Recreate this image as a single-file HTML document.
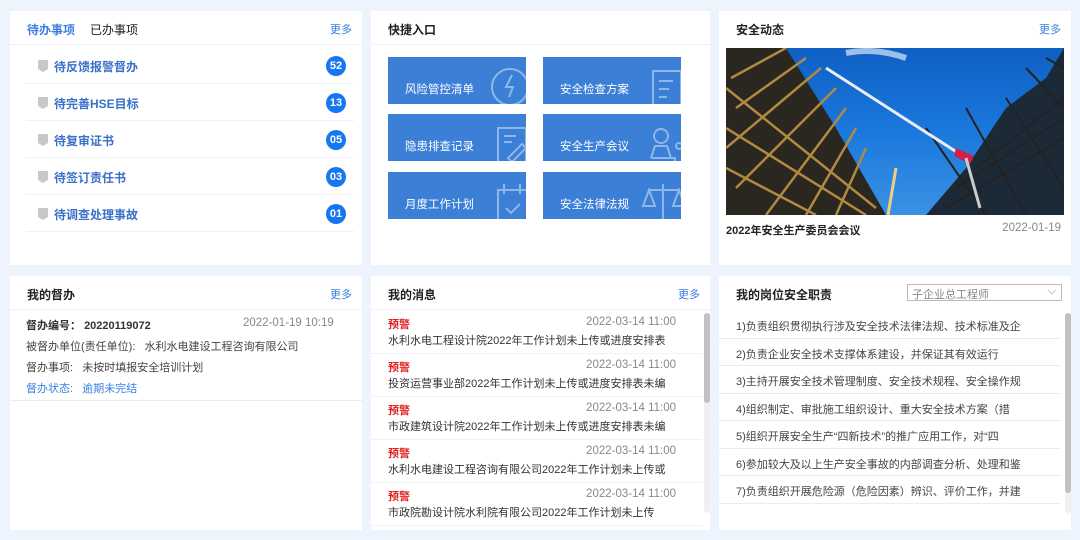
<!DOCTYPE html>
<html><head><meta charset="utf-8"><style>
*{margin:0;padding:0;box-sizing:border-box}
body{width:1080px;height:540px;background:#eef4fd;font-family:"Liberation Sans","Noto Sans CJK SC",sans-serif;position:relative;overflow:hidden;font-size:12px;color:#333}
.p{position:absolute;background:#fff}
.hd{height:34px;border-bottom:1px solid #eef1f5;position:relative}
.t{position:absolute;top:10px;font-size:12px;font-weight:bold;color:#222}
.more{position:absolute;top:10px;right:10px;color:#3a7fe0;font-size:11px}
.it{position:absolute;left:16px;right:8px;height:37px;border-bottom:1px solid #eef1f5}
.it .ic{position:absolute;left:12px;top:13px;width:10px;height:12px;background:#c8c8c8;clip-path:polygon(0 0,100% 0,100% 75%,50% 100%,0 75%)}
.it .tx{position:absolute;left:28px;top:11px;color:#3b70c8;font-weight:bold;font-size:12px}
.it .b{position:absolute;right:8px;top:9px;width:20px;height:20px;border-radius:50%;background:#1677f0;color:#fff;font-weight:bold;font-size:11px;text-align:center;line-height:20px}
.tile{position:absolute;width:138px;height:47px;background:#3c7fd6;color:#fff;font-size:11.5px;overflow:hidden}
.tile span{position:absolute;left:17px;top:24px}
.tile svg{position:absolute;right:-4px;top:8px}
.r{position:absolute;left:16px;font-size:11px;color:#444}
.msg{position:absolute;left:0;right:8px;height:43px;border-bottom:1px solid #eef1f5;font-size:11px}
.msg .w{position:absolute;left:17px;top:5px;color:#e02020;font-weight:bold}
.msg .d{position:absolute;right:26px;top:5px;color:#888;font-size:11.5px}
.msg .c{position:absolute;left:17px;top:21px;color:#333;white-space:nowrap}
.duty{position:absolute;left:0;right:10px;height:27.5px;border-bottom:1px solid #e3eefa;font-size:11px;color:#444;padding:7px 0 0 17px;white-space:nowrap;overflow:hidden}
</style></head><body>

<div class="p" style="left:10px;top:11px;width:352px;height:254px">
<div class="hd"><span class="t" style="left:17px;color:#3a7fe0">待办事项</span><span class="t" style="left:80px;font-weight:normal">已办事项</span><span class="more">更多</span></div>
<div class="it" style="top:36px"><i class="ic"></i><span class="tx">待反馈报警督办</span><span class="b">52</span></div>
<div class="it" style="top:73px"><i class="ic"></i><span class="tx">待完善HSE目标</span><span class="b">13</span></div>
<div class="it" style="top:110px"><i class="ic"></i><span class="tx">待复审证书</span><span class="b">05</span></div>
<div class="it" style="top:147px"><i class="ic"></i><span class="tx">待签订责任书</span><span class="b">03</span></div>
<div class="it" style="top:184px"><i class="ic"></i><span class="tx">待调查处理事故</span><span class="b">01</span></div>
</div>

<div class="p" style="left:371px;top:11px;width:339px;height:254px">
<div class="hd"><span class="t" style="left:17px">快捷入口</span></div>
</div>
<div class="tile" style="left:388px;top:57px"><span>风险管控清单</span><svg width="44" height="44" fill="none" stroke="#8fb6e8" stroke-width="2"><circle cx="24" cy="22" r="18"/><path d="M26 10l-6 12h7l-4 10"/></svg></div>
<div class="tile" style="left:543px;top:57px"><span>安全检查方案</span><svg width="44" height="44" fill="none" stroke="#8fb6e8" stroke-width="2"><rect x="12" y="6" width="28" height="40"/><path d="M18 16h14M18 24h10M18 32h8"/></svg></div>
<div class="tile" style="left:388px;top:114px"><span>隐患排查记录</span><svg width="44" height="44" fill="none" stroke="#8fb6e8" stroke-width="2"><rect x="12" y="6" width="28" height="40"/><path d="M18 14h12M18 20h8M22 36l14-14 4 4-14 14z"/></svg></div>
<div class="tile" style="left:543px;top:114px"><span>安全生产会议</span><svg width="44" height="44" fill="none" stroke="#8fb6e8" stroke-width="2"><circle cx="20" cy="14" r="7"/><path d="M10 36h24v10M10 36l4-12h12l4 12"/><circle cx="38" cy="24" r="3"/></svg></div>
<div class="tile" style="left:388px;top:172px"><span>月度工作计划</span><svg width="44" height="44" fill="none" stroke="#8fb6e8" stroke-width="2"><rect x="12" y="10" width="30" height="34"/><path d="M18 4v10M34 4v10M20 28l5 5 9-9"/></svg></div>
<div class="tile" style="left:543px;top:172px"><span>安全法律法规</span><svg width="44" height="44" fill="none" stroke="#8fb6e8" stroke-width="2"><path d="M22 4v40M8 10h30M8 10l-6 16h12zM38 10l-6 16h12zM14 44h16"/></svg></div>

<div class="p" style="left:719px;top:11px;width:352px;height:254px">
<div style="height:34px;position:relative"><span class="t" style="left:17px">安全动态</span><span class="more">更多</span></div>
<div style="position:absolute;left:7px;top:37px;width:338px;height:167px;overflow:hidden;background:linear-gradient(180deg,#0f5fc4 0%,#1a78dc 50%,#3b92e4 100%)">
<svg width="338" height="167">
<path d="M120 5c20-4 40-2 60 5" stroke="#d8e8f8" stroke-width="6" fill="none" opacity=".7"/>
<path d="M0 0L60 0 110 80 160 167H0z" fill="#2a2620"/>
<g stroke="#b08a40" stroke-width="2.5"><path d="M5 30L60 0M10 60L80 10M0 100L95 20M10 140L110 40M40 167L120 60M80 167L130 80M110 167L140 100"/><path d="M0 40L150 160M0 80L140 167M0 120L90 167"/></g>
<path d="M338 0V167H200L240 120 280 60 320 30z" fill="#1c2a38"/>
<g stroke="#222" stroke-width="2"><path d="M220 160L338 90M230 140L338 70M250 120L338 50M200 80L260 167M240 60L300 167M280 50L338 140M300 20L338 60M320 10L338 20"/></g>
<path d="M100 20L240 110" stroke="#e8eef6" stroke-width="3"/>
<path d="M230 100l18 8-4 8-16-8z" fill="#d0204a"/>
<path d="M240 110l14 50" stroke="#ccc" stroke-width="3"/>
<path d="M170 120l-8 47" stroke="#f0d080" stroke-width="3"/>
</svg>
</div>
<div style="position:absolute;left:7px;top:211px;font-weight:bold;font-size:11px;color:#222">2022年安全生产委员会会议</div>
<div style="position:absolute;right:10px;top:211px;color:#888;font-size:11.5px">2022-01-19</div>
</div>

<div class="p" style="left:10px;top:276px;width:352px;height:254px">
<div class="hd"><span class="t" style="left:17px">我的督办</span><span class="more">更多</span></div>
<div class="r" style="top:41px"><b style="color:#333">督办编号：</b> <b style="color:#333">20220119072</b></div>
<div class="r" style="top:41px;left:233px;color:#888;font-size:11.5px">2022-01-19 10:19</div>
<div class="r" style="top:62px">被督办单位(责任单位):&nbsp;&nbsp;&nbsp;水利水电建设工程咨询有限公司</div>
<div class="r" style="top:83px">督办事项:&nbsp;&nbsp;&nbsp;未按时填报安全培训计划</div>
<div class="r" style="top:104px;color:#3a7fe0">督办状态:&nbsp;&nbsp;&nbsp;逾期未完结</div>
<div style="position:absolute;left:0;right:0;top:124px;border-top:1px solid #e3eefa"></div>
</div>

<div class="p" style="left:371px;top:276px;width:339px;height:254px;overflow:hidden">
<div class="hd"><span class="t" style="left:17px">我的消息</span><span class="more">更多</span></div>
<div class="msg" style="top:35px"><span class="w">预警</span><span class="d">2022-03-14 11:00</span><span class="c">水利水电工程设计院2022年工作计划未上传或进度安排表</span></div>
<div class="msg" style="top:78px"><span class="w">预警</span><span class="d">2022-03-14 11:00</span><span class="c">投资运营事业部2022年工作计划未上传或进度安排表未编</span></div>
<div class="msg" style="top:121px"><span class="w">预警</span><span class="d">2022-03-14 11:00</span><span class="c">市政建筑设计院2022年工作计划未上传或进度安排表未编</span></div>
<div class="msg" style="top:164px"><span class="w">预警</span><span class="d">2022-03-14 11:00</span><span class="c">水利水电建设工程咨询有限公司2022年工作计划未上传或</span></div>
<div class="msg" style="top:207px"><span class="w">预警</span><span class="d">2022-03-14 11:00</span><span class="c">市政院勘设计院水利院有限公司2022年工作计划未上传</span></div>
<div style="position:absolute;left:333px;top:37px;width:6px;height:200px;background:#f0f0f0;border-radius:3px"><div style="height:90px;background:#c1c1c1;border-radius:3px"></div></div>
</div>

<div class="p" style="left:719px;top:276px;width:352px;height:254px">
<div class="hd" style="border:none"><span class="t" style="left:17px">我的岗位安全职责</span>
<div style="position:absolute;left:188px;top:8px;width:155px;height:17px;border:1px solid #bbb;font-size:11px;color:#888;padding:1px 0 0 4px">子企业总工程师<span style="position:absolute;right:5px;top:0">⌵</span></div></div>
<div class="duty" style="top:35px">1)负责组织贯彻执行涉及安全技术法律法规、技术标准及企</div>
<div class="duty" style="top:62.5px">2)负责企业安全技术支撑体系建设，并保证其有效运行</div>
<div class="duty" style="top:90px">3)主持开展安全技术管理制度、安全技术规程、安全操作规</div>
<div class="duty" style="top:117.5px">4)组织制定、审批施工组织设计、重大安全技术方案（措</div>
<div class="duty" style="top:145px">5)组织开展安全生产“四新技术”的推广应用工作，对“四</div>
<div class="duty" style="top:172.5px">6)参加较大及以上生产安全事故的内部调查分析、处理和鉴</div>
<div class="duty" style="top:200px">7)负责组织开展危险源（危险因素）辨识、评价工作，并建</div>
<div style="position:absolute;left:346px;top:37px;width:6px;height:200px;background:#f0f0f0;border-radius:3px"><div style="height:180px;background:#c1c1c1;border-radius:3px"></div></div>
</div>
</body></html>
